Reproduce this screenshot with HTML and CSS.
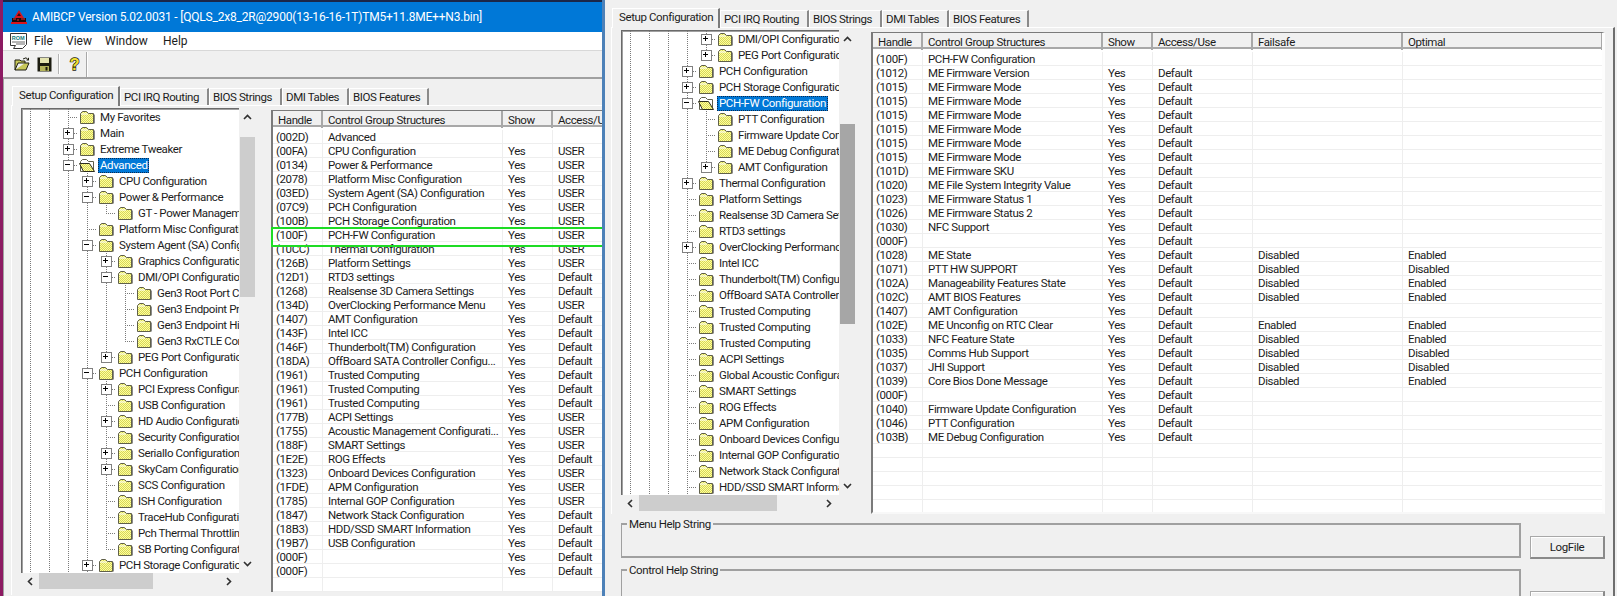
FILE: index.html
```html
<!DOCTYPE html>
<html lang="en">
<head>
<meta charset="utf-8">
<title>AMIBCP</title>
<link rel="stylesheet" href="styles.css">
</head>
<body>
<svg class="defs" aria-hidden="true">
  <defs>
    <pattern id="dither" width="2" height="2" patternUnits="userSpaceOnUse">
      <rect width="2" height="2" fill="#ffff9c"/>
      <rect width="1" height="1" fill="#d6d65a"/>
      <rect x="1" y="1" width="1" height="1" fill="#d6d65a"/>
    </pattern>
    <symbol id="fd" viewBox="0 0 15 14">
      <path d="M.5 3.5 2.5 1.5H6.5L8.5 3.5H13.5V13.5H.5Z" fill="url(#dither)" stroke="#5f5f4a"/>
      <path d="M1 4H8" stroke="#fff" fill="none"/>
      <path d="M14.5 4.5V13.5" stroke="#8a8a8a"/>
    </symbol>
    <symbol id="fo" viewBox="0 0 17 14">
      <path d="M1.5 3.5 3.5 1.5H7.5L9.5 3.5H14.5V13.5H1.5Z" fill="#fff" stroke="#5f5f4a"/>
      <path d="M.5 5.5H10.5L15.5 13.5H4.5Z" fill="url(#dither)" stroke="#2e2e20"/>
    </symbol>
    <symbol id="up" viewBox="0 0 9 6"><path d="M1 5 4.5 1.5 8 5" fill="none" stroke="#303030" stroke-width="1.6"/></symbol>
    <symbol id="dn" viewBox="0 0 9 6"><path d="M1 1 4.5 4.5 8 1" fill="none" stroke="#303030" stroke-width="1.6"/></symbol>
    <symbol id="lf" viewBox="0 0 6 9"><path d="M5 1 1.5 4.5 5 8" fill="none" stroke="#303030" stroke-width="1.6"/></symbol>
    <symbol id="rt" viewBox="0 0 6 9"><path d="M1 1 4.5 4.5 1 8" fill="none" stroke="#303030" stroke-width="1.6"/></symbol>
  </defs>
</svg>

<main class="desk">
<section class="win win-a">
  <header class="title">
    <svg class="logo" viewBox="0 0 16 15"><path d="M8 0 13 8H3Z" fill="#d8141c"/><path d="M8 3 10 6H6Z" fill="#3a0a0a"/><rect x="1" y="8" width="14" height="4" fill="#1c0a0a"/><path d="M2 9H5M7 9V11M10 9H14" stroke="#e8303a"/><rect y="12" width="16" height="2" fill="#d8141c"/></svg>
    <span>AMIBCP Version 5.02.0031 - [QQLS_2x8_2R@2900(13-16-16-1T)TM5+11.8ME++N3.bin]</span>
  </header>
  <nav class="menu">
    <svg class="rom" viewBox="0 0 17 17"><path d="M.5.5H16.5V11.5L12.5 15.5H3.5L5.5 12.5H.5Z" fill="#fff" stroke="#333"/><text x="1.8" y="7" class="romtxt">ROM</text><path d="M2 9H15M6 11H15" stroke="#6a6a6a"/></svg>
    <span class="mi m-file">File</span><span class="mi m-view">View</span><span class="mi m-window">Window</span><span class="mi">Help</span>
  </nav>
  <div class="toolbar">
    <svg class="ti ti-open" viewBox="0 0 16 15"><path d="M1 13V3H6L7 4H11V6H4L1 13H12L15 6H11" fill="#c8c85a" stroke="#1c1c10"/><path d="M9 2 12 .8 14.5 3M14.5 .8V3H12.5" fill="none" stroke="#1c1c10"/></svg>
    <svg class="ti ti-save" viewBox="0 0 15 15"><path d="M.5.5H14.5V14.5H.5Z" fill="#1c1c10"/><rect x="3" y="1" width="9" height="5" fill="#e4e4b0"/><rect x="3" y="9" width="9" height="5" fill="#b4b45a"/><rect x="8.5" y="10" width="2" height="3.5" fill="#1c1c10"/></svg>
    <i class="tsep"></i>
    <svg class="ti ti-help" viewBox="0 0 11 16"><text x="5.5" y="13.5" class="qm">?</text></svg>
    <i class="tsep tsep-end"></i>
  </div>
  <div class="client">
    <div class="tabs">
      <span class="tab t1 on">Setup Configuration</span><span class="tab t2">PCI IRQ Routing</span><span class="tab t3">BIOS Strings</span><span class="tab t4">DMI Tables</span><span class="tab t5">BIOS Features</span>
    </div>
    <div class="page">
      <div class="tree">
        <div class="nodes">
          <div class="n"><i class="g"></i><i class="g"></i><i class="x"></i><svg class="f"><use href="#fd"/></svg><span class="t">My Favorites</span></div>
          <div class="n"><i class="g"></i><i class="g"></i><i class="x p"></i><svg class="f"><use href="#fd"/></svg><span class="t">Main</span></div>
          <div class="n"><i class="g"></i><i class="g"></i><i class="x p"></i><svg class="f"><use href="#fd"/></svg><span class="t">Extreme Tweaker</span></div>
          <div class="n"><i class="g"></i><i class="g"></i><i class="x m"></i><svg class="f fw"><use href="#fo"/></svg><span class="t sel">Advanced</span></div>
          <div class="n"><i class="g"></i><i class="g"></i><i class="g"></i><i class="x p"></i><svg class="f"><use href="#fd"/></svg><span class="t">CPU Configuration</span></div>
          <div class="n"><i class="g"></i><i class="g"></i><i class="g"></i><i class="x m"></i><svg class="f"><use href="#fd"/></svg><span class="t">Power &amp; Performance</span></div>
          <div class="n"><i class="g"></i><i class="g"></i><i class="g"></i><i class="g"></i><i class="x e"></i><svg class="f"><use href="#fd"/></svg><span class="t">GT - Power Management</span></div>
          <div class="n"><i class="g"></i><i class="g"></i><i class="g"></i><i class="x"></i><svg class="f"><use href="#fd"/></svg><span class="t">Platform Misc Configuration</span></div>
          <div class="n"><i class="g"></i><i class="g"></i><i class="g"></i><i class="x m"></i><svg class="f"><use href="#fd"/></svg><span class="t">System Agent (SA) Configuration</span></div>
          <div class="n"><i class="g"></i><i class="g"></i><i class="g"></i><i class="g"></i><i class="x p"></i><svg class="f"><use href="#fd"/></svg><span class="t">Graphics Configuration</span></div>
          <div class="n"><i class="g"></i><i class="g"></i><i class="g"></i><i class="g"></i><i class="x m"></i><svg class="f"><use href="#fd"/></svg><span class="t">DMI/OPI Configuration</span></div>
          <div class="n"><i class="g"></i><i class="g"></i><i class="g"></i><i class="g"></i><i class="g"></i><i class="x"></i><svg class="f"><use href="#fd"/></svg><span class="t">Gen3 Root Port Configuration</span></div>
          <div class="n"><i class="g"></i><i class="g"></i><i class="g"></i><i class="g"></i><i class="g"></i><i class="x"></i><svg class="f"><use href="#fd"/></svg><span class="t">Gen3 Endpoint Presets</span></div>
          <div class="n"><i class="g"></i><i class="g"></i><i class="g"></i><i class="g"></i><i class="g"></i><i class="x"></i><svg class="f"><use href="#fd"/></svg><span class="t">Gen3 Endpoint Hints</span></div>
          <div class="n"><i class="g"></i><i class="g"></i><i class="g"></i><i class="g"></i><i class="g"></i><i class="x e"></i><svg class="f"><use href="#fd"/></svg><span class="t">Gen3 RxCTLE Control</span></div>
          <div class="n"><i class="g"></i><i class="g"></i><i class="g"></i><i class="g"></i><i class="x p e"></i><svg class="f"><use href="#fd"/></svg><span class="t">PEG Port Configuration</span></div>
          <div class="n"><i class="g"></i><i class="g"></i><i class="g"></i><i class="x m"></i><svg class="f"><use href="#fd"/></svg><span class="t">PCH Configuration</span></div>
          <div class="n"><i class="g"></i><i class="g"></i><i class="g"></i><i class="g"></i><i class="x p"></i><svg class="f"><use href="#fd"/></svg><span class="t">PCI Express Configuration</span></div>
          <div class="n"><i class="g"></i><i class="g"></i><i class="g"></i><i class="g"></i><i class="x"></i><svg class="f"><use href="#fd"/></svg><span class="t">USB Configuration</span></div>
          <div class="n"><i class="g"></i><i class="g"></i><i class="g"></i><i class="g"></i><i class="x p"></i><svg class="f"><use href="#fd"/></svg><span class="t">HD Audio Configuration</span></div>
          <div class="n"><i class="g"></i><i class="g"></i><i class="g"></i><i class="g"></i><i class="x"></i><svg class="f"><use href="#fd"/></svg><span class="t">Security Configuration</span></div>
          <div class="n"><i class="g"></i><i class="g"></i><i class="g"></i><i class="g"></i><i class="x p"></i><svg class="f"><use href="#fd"/></svg><span class="t">SerialIo Configuration</span></div>
          <div class="n"><i class="g"></i><i class="g"></i><i class="g"></i><i class="g"></i><i class="x p"></i><svg class="f"><use href="#fd"/></svg><span class="t">SkyCam Configuration</span></div>
          <div class="n"><i class="g"></i><i class="g"></i><i class="g"></i><i class="g"></i><i class="x"></i><svg class="f"><use href="#fd"/></svg><span class="t">SCS Configuration</span></div>
          <div class="n"><i class="g"></i><i class="g"></i><i class="g"></i><i class="g"></i><i class="x"></i><svg class="f"><use href="#fd"/></svg><span class="t">ISH Configuration</span></div>
          <div class="n"><i class="g"></i><i class="g"></i><i class="g"></i><i class="g"></i><i class="x"></i><svg class="f"><use href="#fd"/></svg><span class="t">TraceHub Configuration</span></div>
          <div class="n"><i class="g"></i><i class="g"></i><i class="g"></i><i class="g"></i><i class="x"></i><svg class="f"><use href="#fd"/></svg><span class="t">Pch Thermal Throttling</span></div>
          <div class="n"><i class="g"></i><i class="g"></i><i class="g"></i><i class="g"></i><i class="x e"></i><svg class="f"><use href="#fd"/></svg><span class="t">SB Porting Configuration</span></div>
          <div class="n"><i class="g"></i><i class="g"></i><i class="g"></i><i class="x p"></i><svg class="f"><use href="#fd"/></svg><span class="t">PCH Storage Configuration</span></div>
        </div>
        <div class="vbar"><svg class="ar-v"><use href="#up"/></svg><i class="thumb-v a"></i><svg class="ar-v ar-end"><use href="#dn"/></svg></div>
        <div class="hbar"><svg class="ar-h"><use href="#lf"/></svg><i class="thumb-h a"></i><svg class="ar-h ar-end-h"><use href="#rt"/></svg></div>
      </div>
      <div class="grid grid-a">
        <div class="r h"><span>Handle</span><span>Control Group Structures</span><span>Show</span><span>Access/Use</span></div>
        <div class="r"><span>(002D)</span><span>Advanced</span><span></span><span></span></div>
        <div class="r"><span>(00FA)</span><span>CPU Configuration</span><span>Yes</span><span>USER</span></div>
        <div class="r"><span>(0134)</span><span>Power &amp; Performance</span><span>Yes</span><span>USER</span></div>
        <div class="r"><span>(2078)</span><span>Platform Misc Configuration</span><span>Yes</span><span>USER</span></div>
        <div class="r"><span>(03ED)</span><span>System Agent (SA) Configuration</span><span>Yes</span><span>USER</span></div>
        <div class="r"><span>(07C9)</span><span>PCH Configuration</span><span>Yes</span><span>USER</span></div>
        <div class="r"><span>(100B)</span><span>PCH Storage Configuration</span><span>Yes</span><span>USER</span></div>
        <div class="r mark"><span>(100F)</span><span>PCH-FW Configuration</span><span>Yes</span><span>USER</span></div>
        <div class="r"><span>(10CC)</span><span>Thermal Configuration</span><span>Yes</span><span>USER</span></div>
        <div class="r"><span>(126B)</span><span>Platform Settings</span><span>Yes</span><span>USER</span></div>
        <div class="r"><span>(12D1)</span><span>RTD3 settings</span><span>Yes</span><span>Default</span></div>
        <div class="r"><span>(1268)</span><span>Realsense 3D Camera Settings</span><span>Yes</span><span>Default</span></div>
        <div class="r"><span>(134D)</span><span>OverClocking Performance Menu</span><span>Yes</span><span>USER</span></div>
        <div class="r"><span>(1407)</span><span>AMT Configuration</span><span>Yes</span><span>Default</span></div>
        <div class="r"><span>(143F)</span><span>Intel ICC</span><span>Yes</span><span>Default</span></div>
        <div class="r"><span>(146F)</span><span>Thunderbolt(TM) Configuration</span><span>Yes</span><span>Default</span></div>
        <div class="r"><span>(18DA)</span><span>OffBoard SATA Controller Configu...</span><span>Yes</span><span>Default</span></div>
        <div class="r"><span>(1961)</span><span>Trusted Computing</span><span>Yes</span><span>Default</span></div>
        <div class="r"><span>(1961)</span><span>Trusted Computing</span><span>Yes</span><span>Default</span></div>
        <div class="r"><span>(1961)</span><span>Trusted Computing</span><span>Yes</span><span>Default</span></div>
        <div class="r"><span>(177B)</span><span>ACPI Settings</span><span>Yes</span><span>USER</span></div>
        <div class="r"><span>(1755)</span><span>Acoustic Management Configurati...</span><span>Yes</span><span>USER</span></div>
        <div class="r"><span>(188F)</span><span>SMART Settings</span><span>Yes</span><span>USER</span></div>
        <div class="r"><span>(1E2E)</span><span>ROG Effects</span><span>Yes</span><span>Default</span></div>
        <div class="r"><span>(1323)</span><span>Onboard Devices Configuration</span><span>Yes</span><span>USER</span></div>
        <div class="r"><span>(1FDE)</span><span>APM Configuration</span><span>Yes</span><span>USER</span></div>
        <div class="r"><span>(1785)</span><span>Internal GOP Configuration</span><span>Yes</span><span>USER</span></div>
        <div class="r"><span>(1847)</span><span>Network Stack Configuration</span><span>Yes</span><span>Default</span></div>
        <div class="r"><span>(18B3)</span><span>HDD/SSD SMART Information</span><span>Yes</span><span>Default</span></div>
        <div class="r"><span>(19B7)</span><span>USB Configuration</span><span>Yes</span><span>Default</span></div>
        <div class="r"><span>(000F)</span><span></span><span>Yes</span><span>Default</span></div>
        <div class="r"><span>(000F)</span><span></span><span>Yes</span><span>Default</span></div>
        <div class="r"><span></span><span></span><span></span><span></span></div>
      </div>
    </div>
  </div>
</section>

<section class="win win-b">
  <div class="tabs">
    <span class="tab t1 on">Setup Configuration</span><span class="tab t2">PCI IRQ Routing</span><span class="tab t3">BIOS Strings</span><span class="tab t4">DMI Tables</span><span class="tab t5">BIOS Features</span>
  </div>
  <div class="page">
    <div class="tree">
      <div class="nodes">
        <div class="n"><i class="g"></i><i class="g"></i><i class="g"></i><i class="g"></i><i class="x p"></i><svg class="f"><use href="#fd"/></svg><span class="t">DMI/OPI Configuration</span></div>
        <div class="n"><i class="g"></i><i class="g"></i><i class="g"></i><i class="g"></i><i class="x p e"></i><svg class="f"><use href="#fd"/></svg><span class="t">PEG Port Configuration</span></div>
        <div class="n"><i class="g"></i><i class="g"></i><i class="g"></i><i class="x p"></i><svg class="f"><use href="#fd"/></svg><span class="t">PCH Configuration</span></div>
        <div class="n"><i class="g"></i><i class="g"></i><i class="g"></i><i class="x p"></i><svg class="f"><use href="#fd"/></svg><span class="t">PCH Storage Configuration</span></div>
        <div class="n"><i class="g"></i><i class="g"></i><i class="g"></i><i class="x m"></i><svg class="f fw"><use href="#fo"/></svg><span class="t sel">PCH-FW Configuration</span></div>
        <div class="n"><i class="g"></i><i class="g"></i><i class="g"></i><i class="g"></i><i class="x"></i><svg class="f"><use href="#fd"/></svg><span class="t">PTT Configuration</span></div>
        <div class="n"><i class="g"></i><i class="g"></i><i class="g"></i><i class="g"></i><i class="x"></i><svg class="f"><use href="#fd"/></svg><span class="t">Firmware Update Configuration</span></div>
        <div class="n"><i class="g"></i><i class="g"></i><i class="g"></i><i class="g"></i><i class="x"></i><svg class="f"><use href="#fd"/></svg><span class="t">ME Debug Configuration</span></div>
        <div class="n"><i class="g"></i><i class="g"></i><i class="g"></i><i class="g"></i><i class="x p e"></i><svg class="f"><use href="#fd"/></svg><span class="t">AMT Configuration</span></div>
        <div class="n"><i class="g"></i><i class="g"></i><i class="g"></i><i class="x p"></i><svg class="f"><use href="#fd"/></svg><span class="t">Thermal Configuration</span></div>
        <div class="n"><i class="g"></i><i class="g"></i><i class="g"></i><i class="x"></i><svg class="f"><use href="#fd"/></svg><span class="t">Platform Settings</span></div>
        <div class="n"><i class="g"></i><i class="g"></i><i class="g"></i><i class="x"></i><svg class="f"><use href="#fd"/></svg><span class="t">Realsense 3D Camera Settings</span></div>
        <div class="n"><i class="g"></i><i class="g"></i><i class="g"></i><i class="x"></i><svg class="f"><use href="#fd"/></svg><span class="t">RTD3 settings</span></div>
        <div class="n"><i class="g"></i><i class="g"></i><i class="g"></i><i class="x p"></i><svg class="f"><use href="#fd"/></svg><span class="t">OverClocking Performance Menu</span></div>
        <div class="n"><i class="g"></i><i class="g"></i><i class="g"></i><i class="x"></i><svg class="f"><use href="#fd"/></svg><span class="t">Intel ICC</span></div>
        <div class="n"><i class="g"></i><i class="g"></i><i class="g"></i><i class="x"></i><svg class="f"><use href="#fd"/></svg><span class="t">Thunderbolt(TM) Configuration</span></div>
        <div class="n"><i class="g"></i><i class="g"></i><i class="g"></i><i class="x"></i><svg class="f"><use href="#fd"/></svg><span class="t">OffBoard SATA Controller Configuration</span></div>
        <div class="n"><i class="g"></i><i class="g"></i><i class="g"></i><i class="x"></i><svg class="f"><use href="#fd"/></svg><span class="t">Trusted Computing</span></div>
        <div class="n"><i class="g"></i><i class="g"></i><i class="g"></i><i class="x"></i><svg class="f"><use href="#fd"/></svg><span class="t">Trusted Computing</span></div>
        <div class="n"><i class="g"></i><i class="g"></i><i class="g"></i><i class="x"></i><svg class="f"><use href="#fd"/></svg><span class="t">Trusted Computing</span></div>
        <div class="n"><i class="g"></i><i class="g"></i><i class="g"></i><i class="x"></i><svg class="f"><use href="#fd"/></svg><span class="t">ACPI Settings</span></div>
        <div class="n"><i class="g"></i><i class="g"></i><i class="g"></i><i class="x"></i><svg class="f"><use href="#fd"/></svg><span class="t">Global Acoustic Configuration</span></div>
        <div class="n"><i class="g"></i><i class="g"></i><i class="g"></i><i class="x"></i><svg class="f"><use href="#fd"/></svg><span class="t">SMART Settings</span></div>
        <div class="n"><i class="g"></i><i class="g"></i><i class="g"></i><i class="x"></i><svg class="f"><use href="#fd"/></svg><span class="t">ROG Effects</span></div>
        <div class="n"><i class="g"></i><i class="g"></i><i class="g"></i><i class="x"></i><svg class="f"><use href="#fd"/></svg><span class="t">APM Configuration</span></div>
        <div class="n"><i class="g"></i><i class="g"></i><i class="g"></i><i class="x"></i><svg class="f"><use href="#fd"/></svg><span class="t">Onboard Devices Configuration</span></div>
        <div class="n"><i class="g"></i><i class="g"></i><i class="g"></i><i class="x"></i><svg class="f"><use href="#fd"/></svg><span class="t">Internal GOP Configuration</span></div>
        <div class="n"><i class="g"></i><i class="g"></i><i class="g"></i><i class="x"></i><svg class="f"><use href="#fd"/></svg><span class="t">Network Stack Configuration</span></div>
        <div class="n"><i class="g"></i><i class="g"></i><i class="g"></i><i class="x"></i><svg class="f"><use href="#fd"/></svg><span class="t">HDD/SSD SMART Information</span></div>
      </div>
      <div class="vbar"><svg class="ar-v"><use href="#up"/></svg><i class="thumb-v b"></i><svg class="ar-v ar-end"><use href="#dn"/></svg></div>
      <div class="hbar"><svg class="ar-h"><use href="#lf"/></svg><i class="thumb-h b"></i><svg class="ar-h ar-end-h"><use href="#rt"/></svg></div>
    </div>
    <div class="grid grid-b">
      <div class="r h"><span>Handle</span><span>Control Group Structures</span><span>Show</span><span>Access/Use</span><span>Failsafe</span><span>Optimal</span></div>
      <div class="r"><span>(100F)</span><span>PCH-FW Configuration</span><span></span><span></span><span></span><span></span></div>
      <div class="r"><span>(1012)</span><span>ME Firmware Version</span><span>Yes</span><span>Default</span><span></span><span></span></div>
      <div class="r"><span>(1015)</span><span>ME Firmware Mode</span><span>Yes</span><span>Default</span><span></span><span></span></div>
      <div class="r"><span>(1015)</span><span>ME Firmware Mode</span><span>Yes</span><span>Default</span><span></span><span></span></div>
      <div class="r"><span>(1015)</span><span>ME Firmware Mode</span><span>Yes</span><span>Default</span><span></span><span></span></div>
      <div class="r"><span>(1015)</span><span>ME Firmware Mode</span><span>Yes</span><span>Default</span><span></span><span></span></div>
      <div class="r"><span>(1015)</span><span>ME Firmware Mode</span><span>Yes</span><span>Default</span><span></span><span></span></div>
      <div class="r"><span>(1015)</span><span>ME Firmware Mode</span><span>Yes</span><span>Default</span><span></span><span></span></div>
      <div class="r"><span>(101D)</span><span>ME Firmware SKU</span><span>Yes</span><span>Default</span><span></span><span></span></div>
      <div class="r"><span>(1020)</span><span>ME File System Integrity Value</span><span>Yes</span><span>Default</span><span></span><span></span></div>
      <div class="r"><span>(1023)</span><span>ME Firmware Status 1</span><span>Yes</span><span>Default</span><span></span><span></span></div>
      <div class="r"><span>(1026)</span><span>ME Firmware Status 2</span><span>Yes</span><span>Default</span><span></span><span></span></div>
      <div class="r"><span>(1030)</span><span>NFC Support</span><span>Yes</span><span>Default</span><span></span><span></span></div>
      <div class="r"><span>(000F)</span><span></span><span>Yes</span><span>Default</span><span></span><span></span></div>
      <div class="r"><span>(1028)</span><span>ME State</span><span>Yes</span><span>Default</span><span>Disabled</span><span>Enabled</span></div>
      <div class="r"><span>(1071)</span><span>PTT HW SUPPORT</span><span>Yes</span><span>Default</span><span>Disabled</span><span>Disabled</span></div>
      <div class="r"><span>(102A)</span><span>Manageability Features State</span><span>Yes</span><span>Default</span><span>Disabled</span><span>Enabled</span></div>
      <div class="r"><span>(102C)</span><span>AMT BIOS Features</span><span>Yes</span><span>Default</span><span>Disabled</span><span>Enabled</span></div>
      <div class="r"><span>(1407)</span><span>AMT Configuration</span><span>Yes</span><span>Default</span><span></span><span></span></div>
      <div class="r"><span>(102E)</span><span>ME Unconfig on RTC Clear</span><span>Yes</span><span>Default</span><span>Enabled</span><span>Enabled</span></div>
      <div class="r"><span>(1033)</span><span>NFC Feature State</span><span>Yes</span><span>Default</span><span>Disabled</span><span>Enabled</span></div>
      <div class="r"><span>(1035)</span><span>Comms Hub Support</span><span>Yes</span><span>Default</span><span>Disabled</span><span>Disabled</span></div>
      <div class="r"><span>(1037)</span><span>JHI Support</span><span>Yes</span><span>Default</span><span>Disabled</span><span>Disabled</span></div>
      <div class="r"><span>(1039)</span><span>Core Bios Done Message</span><span>Yes</span><span>Default</span><span>Disabled</span><span>Enabled</span></div>
      <div class="r"><span>(000F)</span><span></span><span>Yes</span><span>Default</span><span></span><span></span></div>
      <div class="r"><span>(1040)</span><span>Firmware Update Configuration</span><span>Yes</span><span>Default</span><span></span><span></span></div>
      <div class="r"><span>(1046)</span><span>PTT Configuration</span><span>Yes</span><span>Default</span><span></span><span></span></div>
      <div class="r"><span>(103B)</span><span>ME Debug Configuration</span><span>Yes</span><span>Default</span><span></span><span></span></div>
      <div class="r"><span></span><span></span><span></span><span></span><span></span><span></span></div>
      <div class="r"><span></span><span></span><span></span><span></span><span></span><span></span></div>
      <div class="r"><span></span><span></span><span></span><span></span><span></span><span></span></div>
      <div class="r"><span></span><span></span><span></span><span></span><span></span><span></span></div>
      <div class="r"><span></span><span></span><span></span><span></span><span></span><span></span></div>
    </div>
  </div>
  <div class="foot">
    <div class="helps">
      <fieldset class="gb gb-menu"><legend>Menu Help String</legend></fieldset>
      <fieldset class="gb gb-ctrl"><legend>Control Help String</legend></fieldset>
    </div>
    <div class="btns">
      <button class="btn" type="button">LogFile</button>
      <button class="btn" type="button"></button>
    </div>
  </div>
</section>
</main>
</body>
</html>
```

FILE: styles.css
```css
* { box-sizing: border-box; }
html, body { margin: 0; height: 100%; overflow: hidden; }
body {
  background: #1b2748;
  font-family: Roboto, "Liberation Sans", sans-serif;
  font-size: 11.5px;
  letter-spacing: -0.4px;
  color: #1c1c1c;
}
.defs { width: 0; height: 0; position: absolute; }
.desk { position: relative; width: 1617px; height: 596px; overflow: hidden; background: linear-gradient(to right, #8c1a62 3px, #1b2748 3px); }
.win { position: absolute; overflow: hidden; background: #f0f0f0; }
.win-a { left: 3px; top: 2px; width: 599px; height: 594px; }
.win-b { left: 602px; top: 0; width: 1015px; height: 596px; border-left: 3px solid #4d81b8; padding: 8px 2px 0 6px; }

.title { height: 30px; background: #0078d7; color: #fff; display: flex; align-items: center; padding-left: 8px; gap: 5px; font-size: 12px; letter-spacing: -0.2px; }
.logo { width: 16px; height: 15px; flex: none; }
.menu { height: 18px; background: #fff; display: flex; align-items: center; padding-left: 7px; font-size: 12px; letter-spacing: 0; }
.rom { width: 17px; height: 17px; flex: none; margin-right: 7px; }
.romtxt { font-size: 5.5px; fill: #0a7a7a; font-weight: 700; font-family: "Liberation Sans", sans-serif; }
.mi { display: block; }
.m-file { width: 32px; }
.m-view { width: 39px; }
.m-window { width: 58px; }
.toolbar { height: 27px; border-top: 1px solid #d8d8d8; display: flex; align-items: center; padding-left: 11px; }
.ti { flex: none; }
.ti-open { width: 16px; height: 15px; margin-right: 7px; }
.ti-save { width: 15px; height: 15px; margin-right: 6px; }
.ti-help { width: 11px; height: 16px; margin-right: 6px; }
.qm { font-size: 16px; font-weight: 700; text-anchor: middle; fill: #f2e230; stroke: #1c1c10; stroke-width: 1.4px; paint-order: stroke; font-family: "Liberation Sans", sans-serif; }
.tsep { width: 2px; height: 20px; background: #b4b4b4; margin-right: 9px; border-right: 1px solid #fff; }
.tsep-end { height: 25px; background: #a8a8a8; margin-right: 0; }

.client { height: 519px; border-left: 1px solid #a0a0a0; border-top: 2px solid #a0a0a0; padding: 7px 0 0 7px; }
.tabs { display: flex; align-items: flex-end; height: 19px; padding-left: 1px; }
.tab { height: 17px; display: block; flex: none; padding: 1px 0 0 3px; border: 1px solid #fff; border-bottom: 0; border-right: 2px solid #8a8a8a; line-height: 15px; white-space: nowrap; }
.tab.on { height: 20px; border-right-color: #7a7a7a; padding: 1px 0 0 6px; margin-bottom: -1px; position: relative; z-index: 1; background: #f0f0f0; }
.t1 { width: 108px; }
.t2 { width: 89px; }
.t3 { width: 73px; }
.t4 { width: 67px; }
.t5 { width: 80px; }
.page { display: flex; align-items: flex-start; gap: 15px; border-top: 1px solid #fff; border-left: 1px solid #fff; padding: 2px 0 0 9px; }
.win-b .page { border-right: 2px solid #6e6e6e; height: 487px; }
.win-a .page { height: 490px; }

.tree {
  flex: none; width: 235px; height: 484px; background: #fff;
  display: grid; grid-template-columns: 218px 16px; grid-template-rows: 465px 16px;
  border: solid #f0f0f0; border-width: 0 1px 3px 0;
  box-shadow: inset 1px 1px #6a6a6a, inset 2px 2px #a0a0a0;
}
.nodes { overflow: hidden; padding-top: 1px; }
.n { height: 16px; display: flex; align-items: center; white-space: nowrap; }
.g, .x { flex: none; width: 19px; height: 16px; display: flex; align-items: center; justify-content: center; }
.g, .x {
  background-image: repeating-linear-gradient(to bottom, #7a7a7a 0 1px, transparent 1px 2px);
  background-size: 1px 16px;
  background-position: 9px 0;
  background-repeat: no-repeat;
}
.x {
  background-image: repeating-linear-gradient(to bottom, #7a7a7a 0 1px, transparent 1px 2px), repeating-linear-gradient(to right, #7a7a7a 0 1px, transparent 1px 2px);
  background-size: 1px 16px, 10px 1px;
  background-position: 9px 0, 9px 8px;
}
.x.e { background-size: 1px 8px, 10px 1px; }
.x.p::before, .x.m::before {
  content: ""; width: 9px; height: 9px; border: 1px solid #808080;
  background-color: #fff; background-repeat: no-repeat;
}
.x.p::before {
  background-image: linear-gradient(#000, #000), linear-gradient(#000, #000);
  background-size: 5px 1px, 1px 5px;
  background-position: 1px 3px, 3px 1px;
}
.x.m::before {
  background-image: linear-gradient(#000, #000);
  background-size: 5px 1px;
  background-position: 1px 3px;
}
.f { width: 15px; height: 14px; margin-left: 2px; flex: none; }
.fw { width: 17px; margin-left: 1px; margin-right: -1px; }
.t { margin-left: 3px; padding: 0 2px; height: 15px; line-height: 14px; }
.sel { background: #0078d7; color: #fff; outline: 1px dotted #0a2a50; outline-offset: -1px; }

.vbar { display: flex; flex-direction: column; align-items: center; background: #f0f0f0; }
.ar-v { width: 9px; height: 6px; margin-top: 6px; flex: none; }
.ar-end { margin-top: auto; margin-bottom: 6px; }
.thumb-v { width: 15px; flex: none; }
.thumb-v.a { margin-top: 17px; height: 160px; background: #cdcdcd; }
.thumb-v.b { margin-top: 82px; height: 200px; background: #a6a6a6; }
.hbar { grid-column: 1 / 3; display: flex; align-items: center; background: #f0f0f0; padding-right: 16px; }
.ar-h { width: 6px; height: 9px; margin-left: 6px; flex: none; }
.ar-end-h { margin-left: auto; margin-right: 7px; }
.thumb-h { height: 16px; flex: none; margin-left: 6px; background: #cdcdcd; }
.thumb-h.a { width: 114px; }
.thumb-h.b { width: 138px; }

.grid {
  flex: none; margin-top: 2px; background: #fff;
  border-top: 1px solid #7a7a7a; border-left: 2px solid #7a7a7a;
}
.grid-a { width: 340px; height: 482px; }
.grid-b { width: 734px; height: 482px; overflow: hidden; border-right: 3px solid #fdfdfd; border-bottom: 2px solid #f8f8f8; }
.r { display: grid; height: 14px; line-height: 13px; border-bottom: 1px solid #eeeeee; }
.grid-a .r { grid-template-columns: 50px 180px 50px 120px; }
.grid-b .r { grid-template-columns: 50px 180px 50px 100px 150px 200px; }
.r span { display: block; padding: 1px 0 0 3px; border-right: 1px solid #eeeeee; white-space: nowrap; overflow: hidden; }
.r span:nth-child(n+2) { padding-left: 5px; }
.r.h { height: 16px; line-height: 15px; background: #f0f0f0; margin-bottom: 3px; border-bottom: 2px solid #a8a8a8; }
.r.h span { padding: 2px 0 0 5px; border-right: 2px solid #a8a8a8; overflow: visible; }
.mark { position: relative; }
.mark::after { content: ""; position: absolute; left: -2px; top: -1px; width: 333px; height: 16px; border: 2px solid #1edc24; }

.foot { display: flex; gap: 9px; padding: 2px 0 0 10px; height: 90px; border-right: 2px solid #6e6e6e; }
.helps { width: 900px; flex: none; display: flex; flex-direction: column; gap: 4px; }
.gb { margin: 0; padding: 0; border: 1px solid #a0a0a0; border-width: 2px 2px 2px 1px; min-width: 0; }
.gb legend { padding: 0 2px; margin-left: 5px; line-height: 16px; }
.gb-menu { height: 42px; flex: none; }
.gb-ctrl { height: 60px; flex: none; }
.btns { display: flex; flex-direction: column; gap: 32px; padding-top: 20px; }
.btn { width: 75px; height: 23px; flex: none; padding: 0; font: inherit; letter-spacing: inherit; color: inherit; background: #f0f0f0; border: 1px solid #a8a8a8; border-right: 2px solid #8a8a8a; border-bottom: 2px solid #8a8a8a; box-shadow: inset 1px 1px #fff; }
```
